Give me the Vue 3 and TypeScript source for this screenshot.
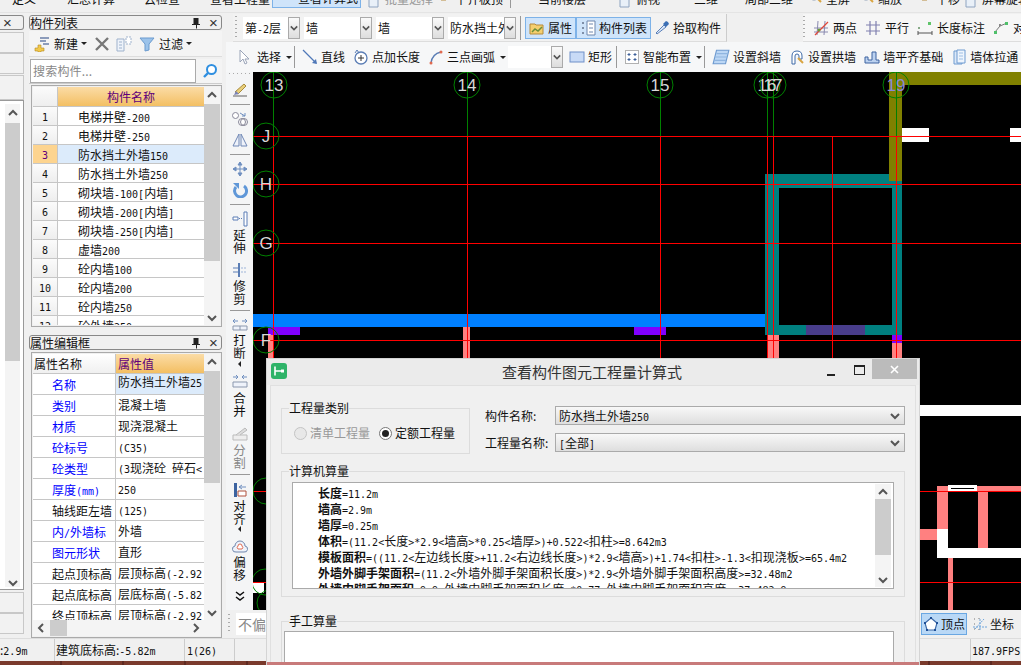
<template>
  <div class="app">
    <!-- top toolbar, mostly cut off by the window edge -->
    <div class="top-row">
      <div v-for="(it, i) in topItems" :key="i" class="top-item" :class="{ active: it.active, dim: it.dim, sep: it.sep }" :style="{ width: it.w + 'px' }">
        <svg v-if="it.icon" class="top-ico" viewBox="0 0 16 16" v-html="icons[it.icon]"></svg>
        <span>{{ it.t }}</span>
      </div>
    </div>

    <div class="body">
      <!-- left dock, only its right edge is visible -->
      <div class="far-dock">
        <div class="panel-title far-title"><span class="pin">×</span></div>
        <div class="far-box h21"></div>
        <div class="far-box h21"></div>
        <div class="far-box h25"></div>
        <div class="far-list">
          <div class="far-scroll">
            <svg class="chev" viewBox="0 0 10 8"><path d="M1 6l4-4 4 4" /></svg>
            <div class="far-thumb"></div>
            <svg class="chev" viewBox="0 0 10 8"><path d="M1 2l4 4 4-4" /></svg>
          </div>
        </div>
        <div class="far-box h21 mt1"></div>
        <div class="far-box h21"></div>
      </div>

      <!-- component list + properties -->
      <div class="side">
        <div class="panel-title">
          <span>构件列表</span>
          <svg class="pin-ico" viewBox="0 0 10 12"><path d="M2.500 1h5v6h1.500v1H6v3.500H5V8H1V7h1.500z" fill="#222" /></svg>
          <span class="pin">×</span>
        </div>
        <div class="list-tools">
          <svg class="ico" viewBox="0 0 16 16" v-html="icons.add"></svg>
          <span class="tool-txt">新建</span><i class="caret"></i>
          <svg class="ico del" viewBox="0 0 16 16"><path d="M2 2l12 12M14 2L2 14" stroke="#777" stroke-width="2.400" /></svg>
          <svg class="ico" viewBox="0 0 16 16" v-html="icons.copy"></svg>
          <svg class="ico" viewBox="0 0 16 16"><path d="M1 2h14L10 8v6l-4 1V8z" fill="#9cc3ea" stroke="#6b9bcf" /></svg>
          <span class="tool-txt">过滤</span><i class="caret"></i>
        </div>
        <div class="search">
          <div class="search-box">搜索构件...</div>
          <svg class="ico search-ico" viewBox="0 0 16 16"><circle cx="9.500" cy="6.500" r="4.500" fill="#fff" stroke="#2f8fe0" stroke-width="2" /><path d="M6 10l-4 4" stroke="#2f8fe0" stroke-width="2.400" /></svg>
        </div>

        <div class="grid list-grid">
          <div class="grid-main">
            <div class="row head">
              <div class="num-cell"></div>
              <div class="name-head">构件名称</div>
            </div>
            <div v-for="(name, i) in listRows" :key="i" class="row" :class="{ selected: i === 2 }">
              <div class="num-cell"><span class="n">{{ i + 1 }}</span></div>
              <div class="name-cell">
                <span v-for="(p, k) in parts(name)" :key="k" :class="{ n: p.a }">{{ p.t }}</span>
              </div>
            </div>
          </div>
          <div class="vscroll">
            <svg class="chev" viewBox="0 0 10 8"><path d="M1 6l4-4 4 4" /></svg>
            <div class="thumb list-thumb"></div>
            <svg class="chev end" viewBox="0 0 10 8"><path d="M1 2l4 4 4-4" /></svg>
          </div>
        </div>

        <div class="panel-title prop-title">
          <span>属性编辑框</span>
          <svg class="pin-ico" viewBox="0 0 10 12"><path d="M2.500 1h5v6h1.500v1H6v3.500H5V8H1V7h1.500z" fill="#222" /></svg>
          <span class="pin">×</span>
        </div>
        <div class="grid prop-grid">
          <div class="prop-top">
            <div class="grid-main">
              <div class="prow phead">
                <div class="pk-head">属性名称</div>
                <div class="pv-head">属性值</div>
              </div>
              <div v-for="(r, i) in propRows" :key="i" class="prow">
                <div class="pk" :class="{ blue: r.blue }">
                  <span v-for="(p, k) in parts(r.k)" :key="k" :class="{ n: p.a }">{{ p.t }}</span>
                </div>
                <div class="pv" :class="{ selected: i === 0 }">
                  <span v-for="(p, k) in parts(r.v)" :key="k" :class="{ n: p.a }">{{ p.t }}</span>
                </div>
              </div>
            </div>
            <div class="vscroll">
              <svg class="chev" viewBox="0 0 10 8"><path d="M1 6l4-4 4 4" /></svg>
              <div class="thumb prop-thumb"></div>
              <svg class="chev end" viewBox="0 0 10 8"><path d="M1 2l4 4 4-4" /></svg>
            </div>
          </div>
          <div class="hscroll">
            <svg class="chev-h" viewBox="0 0 8 10"><path d="M6 1L2 5l4 4" /></svg>
            <div class="hthumb"></div>
            <svg class="chev-h end" viewBox="0 0 8 10"><path d="M2 1l4 4-4 4" /></svg>
          </div>
        </div>
      </div>

      <!-- cad area -->
      <div class="cad">
        <div class="bar-2">
          <div class="bar-2-left">
            <i class="grip"></i>
            <div v-for="c in combos" :key="c.t" class="combo" :style="{ width: c.w + 'px' }">
              <span class="combo-txt">
                <span v-for="(p, k) in parts(c.t)" :key="k" :class="{ n: p.a }">{{ p.t }}</span>
              </span>
              <span class="combo-btn"><svg class="chev" viewBox="0 0 10 8"><path d="M1 2l4 4 4-4" /></svg></span>
            </div>
            <i class="vsep"></i>
            <div class="tog on attr">
              <svg class="ico" viewBox="0 0 16 16" v-html="icons.attr"></svg>属性
            </div>
            <div class="tog on lst">
              <svg class="ico" viewBox="0 0 16 16" v-html="icons.list"></svg>构件列表
            </div>
            <div class="tog pick">
              <svg class="ico" viewBox="0 0 16 16" v-html="icons.pick"></svg>拾取构件
            </div>
          </div>
          <div class="bar-2-right">
            <i class="grip"></i>
            <div v-for="it in measureItems" :key="it.t" class="tb-item">
              <svg class="ico" viewBox="0 0 16 16" v-html="icons[it.icon]"></svg>{{ it.t }}
            </div>
          </div>
        </div>

        <div class="bar-3">
          <svg class="ico sel-ico" viewBox="0 0 16 16" v-html="icons.select"></svg>
          <span class="draw-t sel-t">选择</span><i class="caret"></i>
          <i class="vsep sm"></i>
          <svg class="ico" viewBox="0 0 16 16" v-html="icons.line"></svg>
          <span class="draw-t">直线</span>
          <svg class="ico" viewBox="0 0 16 16" v-html="icons.pointlen"></svg>
          <span class="draw-t">点加长度</span>
          <svg class="ico" viewBox="0 0 16 16" v-html="icons.arc"></svg>
          <span class="draw-t">三点画弧</span><i class="caret"></i>
          <div class="combo blank"><span class="combo-txt"></span><span class="combo-btn"><svg class="chev" viewBox="0 0 10 8"><path d="M1 2l4 4 4-4" /></svg></span></div>
          <svg class="ico" viewBox="0 0 16 16" v-html="icons.rect"></svg>
          <span class="draw-t">矩形</span>
          <i class="vsep sm"></i>
          <svg class="ico" viewBox="0 0 16 16" v-html="icons.smart"></svg>
          <span class="draw-t">智能布置</span><i class="caret"></i>
          <i class="vsep sm"></i>
          <svg class="ico w18" viewBox="0 0 16 16" v-html="icons.slope"></svg>
          <span class="draw-t">设置斜墙</span>
          <svg class="ico" viewBox="0 0 16 16" v-html="icons.arch"></svg>
          <span class="draw-t">设置拱墙</span>
          <svg class="ico" viewBox="0 0 16 16" v-html="icons.base"></svg>
          <span class="draw-t">墙平齐基础</span>
          <svg class="ico" viewBox="0 0 16 16" v-html="icons.pull"></svg>
          <span class="draw-t">墙体拉通</span>
        </div>

        <div class="cad-mid">
          <div class="vtools">
            <i class="vgrip"></i>
            <template v-for="(v, i) in vtools" :key="i">
              <div v-if="v.sep" class="v-sep" :style="{ height: v.h + 'px' }"><i></i></div>
              <div v-else-if="v.icon" class="v-ico" :style="{ height: v.h + 'px' }">
                <svg class="ico" viewBox="0 0 16 16" v-html="icons[v.icon]"></svg>
              </div>
              <div v-else-if="v.tri" class="v-tri" :style="{ height: v.h + 'px' }"><i></i></div>
              <div v-else-if="v.more" class="v-tri" :style="{ height: v.h + 'px' }">
                <svg width="10" height="11" viewBox="0 0 10 11"><path d="M1 1l4 3 4-3M1 6l4 3 4-3" fill="none" stroke="#111" stroke-width="1.500" /></svg>
              </div>
              <div v-else class="v-txt" :class="{ dim: v.dim }" :style="{ height: v.h + 'px' }">
                <span v-for="ch in v.t" :key="ch">{{ ch }}</span>
              </div>
            </template>
          </div>

          <svg class="canvas" viewBox="253 72 768 538" shape-rendering="crispEdges">
            <rect v-for="(r, i) in blocks" :key="'b' + i" :x="r[0]" :y="r[1]" :width="r[2]" :height="r[3]" :fill="r[4]" />
            <line v-for="(l, i) in axisLines" :key="'l' + i" :x1="l[0]" :y1="l[1]" :x2="l[2]" :y2="l[3]" :stroke="l[4]" />
            <g v-for="a in axes" :key="a.t + a.x + a.y">
              <circle :cx="a.x" :cy="a.y" r="13" fill="none" stroke="#008000" shape-rendering="auto" />
              <text :x="a.x" :y="a.y + 6" class="axis-txt" :fill="a.c || '#d8d8d8'" text-anchor="middle">{{ a.t }}</text>
            </g>
          </svg>
        </div>

        <div class="bar-4">
          <i class="grip short"></i>
          <div class="offset-box">不偏移</div>
          <div class="snap">
            <div class="snap-btn on"><svg class="ico" viewBox="0 0 16 16" v-html="icons.vertex"></svg>顶点</div>
            <div class="snap-btn"><svg class="ico" viewBox="0 0 16 16" v-html="icons.coord"></svg>坐标</div>
          </div>
        </div>
      </div>
    </div>

    <div class="status">
      <span class="st st-a">:<span class="n">2.9m</span></span>
      <span class="st st-b">建筑底标高:<span class="n">-5.82m</span></span>
      <span class="st st-c"><span class="n">1(26)</span></span>
      <span class="st st-d"></span>
      <span class="st st-e"><span class="n">187.9FPS</span></span>
    </div>
    <div class="desktop"></div>

    <!-- floating dialog window -->
    <div class="dialog">
      <div class="dlg-title">
        <svg class="dlg-logo" viewBox="0 0 16 16"><rect width="16" height="16" rx="3" fill="#2eb368" /><path d="M4 3.500v9M4 8h6" stroke="#fff" stroke-width="1.600" fill="none" /><rect x="10" y="6.500" width="3" height="3" fill="#fff" /></svg>
        <span class="dlg-name">查看构件图元工程量计算式</span>
        <i class="win-min"></i>
        <i class="win-max"></i>
        <div class="win-close"><svg width="9" height="9" viewBox="0 0 9 9"><path d="M1 1l7 7M8 1L1 8" stroke="#fff" stroke-width="1.600" /></svg></div>
      </div>
      <div class="dlg-inner">
        <div class="dlg-top">
          <fieldset class="type-group">
            <legend>工程量类别</legend>
            <div class="radios">
              <span class="radio off"></span><span class="radio-t off-t">清单工程量</span>
              <span class="radio checked"></span><span class="radio-t">定额工程量</span>
            </div>
          </fieldset>
          <div class="fields">
            <div class="field">
              <label>构件名称:</label>
              <div class="select">防水挡土外墙<span class="n">250</span>
                <svg class="chev sel-chev" viewBox="0 0 10 8"><path d="M1 2l4 4 4-4" /></svg>
              </div>
            </div>
            <div class="field">
              <label>工程量名称:</label>
              <div class="select"><span class="n">[</span>全部<span class="n">]</span>
                <svg class="chev sel-chev" viewBox="0 0 10 8"><path d="M1 2l4 4 4-4" /></svg>
              </div>
            </div>
          </div>
        </div>

        <fieldset class="calc-group">
          <legend>计算机算量</legend>
          <div class="calc-box">
            <div class="calc-lines">
              <div v-for="l in calcLines" :key="l.b" class="calc-line">
                <b>{{ l.b }}</b><span v-for="(p, k) in parts(l.r)" :key="k" :class="{ n: p.a }">{{ p.t }}</span>
              </div>
            </div>
            <div class="vscroll calc-scroll">
              <svg class="chev" viewBox="0 0 10 8"><path d="M1 6l4-4 4 4" /></svg>
              <div class="thumb calc-thumb"></div>
              <svg class="chev end" viewBox="0 0 10 8"><path d="M1 2l4 4 4-4" /></svg>
            </div>
          </div>
        </fieldset>

        <fieldset class="manual-group">
          <legend>手工算量</legend>
          <div class="manual-box"></div>
        </fieldset>
      </div>
      <div class="dlg-strip"></div>
    </div>
  </div>
</template>

<script setup lang="ts">
interface Part { t: string; a: boolean }

// digits are half width in the original, so ascii runs get their own smaller mono span
const parts = (s: string): Part[] =>
  s.split(/([\x00-\x7f]+)/).filter(Boolean).map((t) => ({ t, a: /^[\x00-\x7f]/.test(t) }));

const icons: Record<string, string> = {
  add: '<path d="M1 12h3V9h3v3h3v3H7v1H4v-1H1z" fill="#f2c94c" stroke="#b58a1e" stroke-width=".6"/><path d="M6 2h9M6 5h6M9 8h6" stroke="#6a7fa8" stroke-width="1.300"/>',
  copy: '<path d="M1 3h7v12H1z" fill="#eef3fa" stroke="#9fb2cc"/><path d="M3 6h3M3 9h3M3 12h3" stroke="#9fb2cc"/><path d="M10 1h5v7h-5z" fill="#fff" stroke="#9fb2cc" stroke-dasharray="2 1"/>',
  attr: '<path d="M1 4h5l1 1h7v9H1z" fill="#f4cf6f" stroke="#b58a3c"/><path d="M3 12l3-3 3 2 4-4" stroke="#6b8f3a" stroke-width="1.500" fill="none"/>',
  list: '<path d="M2 2h2v2H2zM2 7h2v2H2zM2 12h2v2H2z" fill="#7f8fa8"/><path d="M7 1h8v14H7z" fill="#fff" stroke="#6f87ad"/><path d="M9 4h4M9 8h4M9 12h4" stroke="#6f87ad"/>',
  pick: '<path d="M3 14l-1-1 8-8 2 2z" fill="#d8e6f8" stroke="#5c80b8"/><path d="M9 4l3 3 3-3-1-2-2-1z" fill="#3c6fb4"/>',
  twopt: '<path d="M1 8h14M1 12h14M5 1l-1 14M12 1l-1 14" stroke="#8a8ab0"/><path d="M2 15L15 2" stroke="#e0473a" stroke-width="1.200"/><circle cx="6" cy="10" r="1.500" fill="#6b9a3a"/>',
  parallel: '<path d="M1 5h14M1 11h14M5 1v14M11 1v14" stroke="#8080b0" stroke-width="1.200"/>',
  dim: '<rect x="11" y="2" width="3" height="3" fill="#5fc46a"/><rect x="1" y="7" width="2" height="2" fill="#8a8"/><path d="M1 11v4M15 11v4M1 13h14" stroke="#555"/>',
  align2: '<path d="M2 12L7 6l7-3" stroke="#777" fill="none"/><rect x="1" y="11" width="3" height="3" fill="#4fc06a"/><rect x="12" y="2" width="3" height="3" fill="#4fc06a"/><rect x="6" y="4" width="2" height="2" fill="#888"/>',
  select: '<path d="M4 1v12l3-3 2 5 2-1-2-4h4z" fill="#fff" stroke="#9aa4b8"/>',
  line: '<path d="M1 1l13 13" stroke="#4f78b8" stroke-width="1.300"/><path d="M15 15l-5-1 4-4z" fill="#4f78b8"/>',
  pointlen: '<circle cx="8" cy="9" r="6" fill="#fff" stroke="#5a7db5" stroke-width="1.300"/><path d="M8 6v6M5 9h6" stroke="#333"/><path d="M2 4l2-3 2 3" fill="none" stroke="#5a7db5"/>',
  arc: '<path d="M3 14Q4 5 13 3" fill="none" stroke="#5a7db5" stroke-width="1.300"/><circle cx="3" cy="14" r="1.500" fill="#e06a50"/><circle cx="13" cy="3" r="1.500" fill="#e06a50"/>',
  rect: '<rect x="1" y="3" width="14" height="10" fill="#c8daf6" stroke="#6f90c8"/>',
  smart: '<rect x="1.500" y="1.500" width="13" height="13" fill="#fff" stroke="#666" stroke-dasharray="1 1"/><path d="M5 4v3M3.500 5.500h3M11 4v3M9.500 5.500h3M5 9v3M3.500 10.500h3M11 9v3M9.500 10.500h3" stroke="#3c5f98"/>',
  slope: '<path d="M4 2h11l-3 12H1z" fill="#bcd7f5" stroke="#6f9bd0"/><path d="M4 5h10M3 8h10M2.500 11h10" stroke="#8fb5e0"/>',
  arch: '<path d="M3 15V7q0-5 5-5t5 5v3h-3V7q0-2-2-2T6 7v8z" fill="#fff" stroke="#3f6ba8"/><path d="M9 9l5 5" stroke="#d9a441" stroke-width="2"/>',
  base: '<path d="M1 14h14v-3h-3V3H8v8H4V8H1z" fill="#bcd2f0" stroke="#3c63a0"/>',
  pull: '<path d="M3 2h8v13H3z" fill="#dbe8f8" stroke="#6f9bd0"/><path d="M6 1h8v13H6z" fill="#eef5fd" stroke="#6f9bd0"/><path d="M8 4h4M8 7h4M8 10h4" stroke="#9fbfe4"/>',
  brush: '<path d="M1 14h14" stroke="#777" stroke-width="1.200"/><path d="M3 10l9-8 2 2-8 8z" fill="#e9cf7a" stroke="#a98c3c"/><path d="M2 13l2-4 3 3z" fill="#7a83b8"/>',
  link: '<circle cx="3.500" cy="4.500" r="3" fill="#fff" stroke="#889"/><circle cx="10" cy="11" r="3.500" fill="#fff" stroke="#889"/><circle cx="12" cy="11" r="3.500" fill="none" stroke="#889"/><path d="M8 2l5 3m0 0h-3m3 0V2" fill="none" stroke="#6f8fc0"/>',
  mirror: '<path d="M7 2L1 14h6zM9 2l6 12H9z" fill="#eef2fa" stroke="#6f87b5"/>',
  move: '<path d="M8 1v14M1 8h14M8 1L6 4h4zM8 15l-2-3h4zM1 8l3-2v4zM15 8l-3-2v4z" stroke="#6f8fc0" fill="#6f8fc0"/>',
  rotate: '<path d="M12 4a6 6 0 1 1-8 1" fill="none" stroke="#5f97d8" stroke-width="3"/><path d="M1 1h6v6z" fill="#5f97d8"/>',
  extend: '<path d="M12 1h3v14h-3z" fill="#fff" stroke="#5a7db5"/><path d="M1 6h5v3H1z" fill="#fff" stroke="#5a7db5"/><path d="M7 7.500h4" stroke="#5a7db5" stroke-dasharray="1 1"/>',
  trim: '<path d="M7 1v14" stroke="#5a7db5" stroke-width="2"/><path d="M1 6h5M1 10h5" stroke="#5a7db5"/><path d="M9 6h6M9 10h6" stroke="#9db4d8" stroke-dasharray="2 1"/>',
  breakit: '<path d="M1 5h5M1 5l2-2M1 5l2 2M15 5h-5M15 5l-2-2M15 5l-2 2" stroke="#6f8fc0" fill="none"/><path d="M1 10h14v4H1zM8 10v4" fill="#eef2fa" stroke="#8a97ad"/>',
  merge: '<path d="M1 3h5M6 3L4 1M6 3L4 5M15 3h-5M10 3l2-2M10 3l2 2" stroke="#6f8fc0" fill="none"/><path d="M1 8h14v5H1z" fill="#eef2fa" stroke="#8a97ad"/>',
  split: '<path d="M1 14h14v-5H1z" fill="#eee" stroke="#bbb"/><path d="M4 9L13 2l2 2-7 5" fill="#ddd" stroke="#bbb"/>',
  alignit: '<path d="M2 1h3v14H2z" fill="#3c63a0"/><path d="M6 9h8v5H6z" fill="#fff" stroke="#b0503c"/><path d="M7 5h7M7 5l3-2M7 5l3 2" stroke="#6f8fc0" fill="none"/>',
  offset: '<path d="M4 14a3 3 0 0 1-1-6 5 5 0 0 1 10 0 3 3 0 0 1-1 6z" fill="#eef2fa" stroke="#6f87ad"/><path d="M6 11a2 2 0 0 1 0-3 2 2 0 0 1 4 0 2 2 0 0 1 0 3z" fill="#fff" stroke="#e06a50"/>',
  vertex: '<path d="M8 2l6 5-2 7H4L2 7z" fill="#fff" stroke="#3f6ba8" stroke-width="1.200"/><path d="M7 1h2v2H7zM13 6h2v2h-2zM11 13h2v2h-2zM3 13h2v2H3zM1 6h2v2H1z" fill="#1f4f96"/>',
  coord: '<path d="M2 3h1M2 8h1M2 13h1M7 2v1M7 13v1" stroke="#777"/><path d="M1 11h14M8 3v12M3 13l9-10" stroke="#6fa5dc" stroke-dasharray="2 1" fill="none"/>',
  doc: '<path d="M3 1h9v14H3z" fill="#e9f0f8" stroke="#8fa4c0"/>',
  sum: '<path d="M1 1h14v6H1z" fill="#cde3c8" stroke="#6aa35c"/>',
  view: '<circle cx="5" cy="3" r="4" fill="#dfe8f2" stroke="#7f93ad"/><circle cx="12" cy="3" r="3" fill="#dfe8f2" stroke="#7f93ad"/>',
  zoom: '<circle cx="7" cy="3" r="5" fill="#e8f0f8" stroke="#7f93ad"/><path d="M10 6l4 4" stroke="#d9a441" stroke-width="2"/>',
  calc: '<path d="M1 0h9v6H1z" fill="#f2d58a" stroke="#b58a3c"/><circle cx="12" cy="4" r="3" fill="#888"/>',
  pan: '<path d="M3 0h10v5l-3 3H5z" fill="#eed39a" stroke="#b58a3c"/>',
}

const topItems = [
  { t: '定义', w: 38 },
  { t: '', w: 3, sep: true },
  { t: '汇总计算', w: 76, icon: 'sum' },
  { t: '云检查', w: 65, icon: 'sum' },
  { t: '', w: 3, sep: true },
  { t: '查看工程量', w: 87, icon: 'view' },
  { t: '查看计算式', w: 89, icon: 'calc', active: true },
  { t: '批量选择', w: 74, icon: 'doc', dim: true },
  { t: '平齐板顶', w: 70, icon: 'pan' },
  { t: '', w: 8, sep: true },
  { t: '当前楼层', w: 75, icon: '' },
  { t: '俯视', w: 74, icon: 'doc' },
  { t: '三维', w: 58, icon: 'view' },
  { t: '局部三维', w: 75, icon: 'view' },
  { t: '', w: 4, sep: true },
  { t: '全屏', w: 53, icon: 'zoom' },
  { t: '缩放', w: 52, icon: 'zoom' },
  { t: '平移', w: 58, icon: 'pan' },
  { t: '屏幕旋转', w: 70, icon: 'doc' },
]

const listRows = ['电梯井壁-200', '电梯井壁-250', '防水挡土外墙150', '防水挡土外墙250', '砌块墙-100[内墙]', '砌块墙-200[内墙]', '砌块墙-250[内墙]', '虚墙200', '砼内墙100', '砼内墙200', '砼内墙250', '砼外墙250']

const propRows = [
  { k: '名称', v: '防水挡土外墙25', blue: true },
  { k: '类别', v: '混凝土墙', blue: true },
  { k: '材质', v: '现浇混凝土', blue: true },
  { k: '砼标号', v: '(C35)', blue: true },
  { k: '砼类型', v: '(3现浇砼 碎石<', blue: true },
  { k: '厚度(mm)', v: '250', blue: true },
  { k: '轴线距左墙', v: '(125)' },
  { k: '内/外墙标', v: '外墙', blue: true },
  { k: '图元形状', v: '直形', blue: true },
  { k: '起点顶标高', v: '层顶标高(-2.92' },
  { k: '起点底标高', v: '层底标高(-5.82' },
  { k: '终点顶标高', v: '层顶标高(-2.92' },
]

const combos = [
  { t: '第-2层', w: 57 },
  { t: '墙', w: 68 },
  { t: '墙 ', w: 68 },
  { t: '防水挡土外墙', w: 68 },
]

const measureItems = [
  { t: '两点', icon: 'twopt' },
  { t: '平行', icon: 'parallel' },
  { t: '长度标注', icon: 'dim' },
  { t: '对', icon: 'align2' },
]

interface VTool { h: number; sep?: boolean; icon?: string; t?: string; tri?: boolean; more?: boolean; dim?: boolean }

const vtools: VTool[] = [
  { h: 20, icon: 'brush' }, { h: 8, sep: true },
  { h: 21, icon: 'link' }, { h: 21, icon: 'mirror' }, { h: 8, sep: true },
  { h: 21, icon: 'move' }, { h: 21, icon: 'rotate' }, { h: 8, sep: true },
  { h: 21, icon: 'extend' }, { h: 26, t: '延伸' },
  { h: 25, icon: 'trim' }, { h: 25, t: '修剪' }, { h: 10, sep: true },
  { h: 19, icon: 'breakit' }, { h: 25, t: '打断' }, { h: 10, tri: true },
  { h: 23, icon: 'merge' }, { h: 26, t: '合并' },
  { h: 26, icon: 'split' }, { h: 26, t: '分割', dim: true }, { h: 8, sep: true },
  { h: 22, icon: 'alignit' }, { h: 26, t: '对齐' }, { h: 6, tri: true },
  { h: 24, icon: 'offset' }, { h: 26, t: '偏移' }, { h: 28, more: true },
]

// x, y, w, h, colour in page coordinates; the svg viewBox starts at the canvas corner
const blocks: [number, number, number, number, string][] = [
  [253, 314, 513, 13, '#0080ff'],
  [268, 327, 32, 8, '#8000ff'],
  [634, 327, 32, 8, '#8000ff'],
  [268, 335, 6, 25, '#ff8080'],
  [463, 327, 7, 33, '#ff8080'],
  [768, 335, 11, 25, '#ff8080'],
  [892, 335, 10, 8, '#8000ff'],
  [892, 343, 10, 17, '#ff8080'],
  [889, 72, 13, 109, '#808000'],
  [902, 72, 119, 13, '#808000'],
  [902, 128, 27, 14, '#ffffff'],
  [1010, 128, 11, 14, '#ffffff'],
  [765, 174, 137, 14, '#008080'],
  [765, 325, 137, 10, '#008080'],
  [765, 174, 14, 161, '#008080'],
  [892, 174, 10, 161, '#008080'],
  [889, 174, 13, 7, '#808000'],
  [806, 325, 59, 10, '#483d8b'],
  [920, 405, 101, 11, '#ffffff'],
  [937, 486, 84, 6, '#ff8080'],
  [937, 486, 11, 43, '#ff8080'],
  [948, 485, 29, 7, '#ffffff'],
  [951, 488, 23, 1, '#000000'],
  [978, 486, 10, 62, '#ff8080'],
  [920, 529, 17, 11, '#ff8080'],
  [937, 529, 11, 29, '#ffffff'],
  [937, 548, 84, 10, '#ffffff'],
  [948, 558, 5, 52, '#ff8080'],
  [253, 583, 11, 10, '#ffffff'],
]

// every axis is green above line J and red from there down
const axisLines: [number, number, number, number, string][] = [
  ...[273.5, 467.5, 660.5, 767.5, 773.5, 896.5].flatMap((x): [number, number, number, number, string][] => [
    [x, 72, x, 136, '#008000'],
    [x, 136, x, 360, '#ff0000'],
  ]),
  [832.5, 136, 832.5, 360, '#ff0000'],
  [253, 136.5, 1021, 136.5, '#ff0000'],
  [253, 184.5, 1021, 184.5, '#ff0000'],
  [253, 243.5, 1021, 243.5, '#ff0000'],
  [253, 340.5, 1021, 340.5, '#ff0000'],
  [253, 491.5, 1021, 491.5, '#ff0000'],
  [253, 582.5, 1021, 582.5, '#ff0000'],
]

const axes = [
  { t: '13', x: 274, y: 85 }, { t: '14', x: 467, y: 85 }, { t: '15', x: 660, y: 85 },
  { t: '16', x: 767, y: 85 }, { t: '17', x: 773, y: 85 }, { t: '19', x: 896, y: 85, c: '#8a8ad8' },
  { t: 'J', x: 266, y: 136 }, { t: 'H', x: 266, y: 184 }, { t: 'G', x: 266, y: 243 }, { t: 'F', x: 266, y: 340 },
  { t: '', x: 266, y: 491 }, { t: '', x: 265, y: 582 }, { t: '', x: 270, y: 603 },
]

const calcLines = [
  { b: '长度', r: '=11.2m' },
  { b: '墙高', r: '=2.9m' },
  { b: '墙厚', r: '=0.25m' },
  { b: '体积', r: '=(11.2<长度>*2.9<墙高>*0.25<墙厚>)+0.522<扣柱>=8.642m3' },
  { b: '模板面积', r: '=((11.2<左边线长度>+11.2<右边线长度>)*2.9<墙高>)+1.74<扣柱>-1.3<扣现浇板>=65.4m2' },
  { b: '外墙外脚手架面积', r: '=(11.2<外墙外脚手架面积长度>)*2.9<外墙外脚手架面积高度>=32.48m2' },
  { b: '外墙内脚手架面积', r: '=9.9<外墙内脚手架面积长度>*0.77<外墙内脚手架面积高度>=37.482 9' },
]
</script>

<style>
html, body { margin: 0; background: #f0f0f0; overflow: hidden; }
</style>

<style scoped>
.app {
  width: 1021px;
  height: 665px;
  display: flex;
  flex-direction: column;
  position: relative;
  overflow: hidden;
  background: #f0f0f0;
  font: 12px/14px "Noto Sans CJK SC", sans-serif;
  color: #111;
}
.n { font-family: "DejaVu Sans Mono", monospace; font-size: 10px; }
i { display: block; flex: none; }

/* top cut-off row */
.top-row { height: 13px; flex: none; display: flex; align-items: flex-start; border-bottom: 1px solid #e4e4e4; box-sizing: border-box; }
.top-item { height: 8px; flex: none; display: flex; justify-content: flex-end; align-items: flex-end; gap: 3px; padding-right: 2px; box-sizing: border-box; overflow: hidden; }
.top-item span { position: relative; top: -2px; white-space: nowrap; font-size: 12px; }
.top-item.dim span { color: #999; }
.top-item.active { background: #cfe4fa; border: 1px solid #7db2e8; border-top: 0; }
.top-item.sep { position: relative; }
.top-item.sep::after { content: ""; width: 1px; height: 8px; background: #999; margin-right: 0; }
.top-ico { width: 16px; height: 16px; flex: none; margin-bottom: 0; align-self: flex-start; margin-top: -8px; }

.body { flex: 1; min-height: 0; display: flex; }

.far-dock { width: 24px; flex: none; padding-top: 2px; margin-right: 5px; display: flex; flex-direction: column; }
.panel-title { height: 15px; flex: none; box-sizing: border-box; border: 1px solid #888; border-radius: 3px; background: #f0f0f0; display: flex; align-items: center; font-size: 12px; }
.panel-title > span:first-child { margin-right: auto; }
.far-title { border-left: 0; border-radius: 0 3px 3px 0; justify-content: flex-end; }
.pin { font: 15px/13px "Liberation Sans", sans-serif; color: #333; width: 15px; text-align: center; }
.pin-ico { width: 10px; height: 12px; margin-right: 5px; }
.far-box { border: 1px solid #c8c8c8; border-left: 0; box-sizing: border-box; flex: none; background: #f2f2f2; }
.h21 { height: 21px; }
.h25 { height: 25px; margin-top: 1px; }
.far-box:nth-child(2) { margin-top: 2px; }
.mt1 { margin-top: 2px; }
.far-list { height: 490px; flex: none; background: #fff; border: 1px solid #999; border-left: 0; box-sizing: border-box; padding: 3px 3px 2px 5px; }
.far-scroll { width: 15px; height: 100%; background: #f4f4f4; display: flex; flex-direction: column; align-items: center; justify-content: space-between; padding-top: 5px; box-sizing: border-box; }
.far-thumb { width: 15px; height: 238px; background: #ccc; margin-bottom: auto; margin-top: 6px; }
.chev { width: 10px; height: 8px; flex: none; }
.chev path { fill: none; stroke: #555; stroke-width: 2; }
.chev-h { width: 8px; height: 10px; flex: none; }
.chev-h path { fill: none; stroke: #555; stroke-width: 2; }

/* side panels */
.side { width: 193px; flex: none; padding-top: 2px; display: flex; flex-direction: column; }
.list-tools { height: 26px; flex: none; margin-top: 1px; display: flex; align-items: center; padding-left: 5px; background: #f4f4f4; border-bottom: 1px solid #ddd; box-sizing: border-box; }
.ico { width: 16px; height: 16px; flex: none; }
.w18 { width: 18px; height: 18px; }
.tool-txt { margin-left: 4px; }
.caret { width: 0; height: 0; border: 3px solid transparent; border-top: 3px solid #222; border-bottom: 0; margin-left: 3px; }
.del { margin: 0 6px 0 7px; }
.del + .ico { margin-right: 7px; }
.search { height: 25px; flex: none; margin-top: 2px; display: flex; align-items: center; padding-left: 1px; background: #f4f4f4; border-bottom: 1px solid #ccc; box-sizing: border-box; }
.search-box { width: 166px; height: 24px; box-sizing: border-box; background: #fff; border: 1px solid #aaa; color: #888; padding: 4px 2px; letter-spacing: .2px; }
.search-ico { margin-left: 6px; }

.grid { border: 1px solid #aaa; background: #f0f0f0; margin-left: 2px; width: 191px; box-sizing: border-box; flex: none; padding: 1px; }
.list-grid { margin-top: 1px; height: 242px; display: flex; overflow: hidden; }
.grid-main { flex: 1; min-width: 0; overflow: hidden; background: #fff; }
.row { height: 19px; box-sizing: border-box; display: flex; border-bottom: 1px solid #c6c6c6; }
.row.head { height: 20px; border-bottom: 1px solid #c6c6c6; }
.num-cell { width: 25px; flex: none; box-sizing: border-box; text-align: center; background: linear-gradient(#fbfbfb, #eee); border-right: 1px solid #c6c6c6; line-height: 18px; }
.name-head { flex: 1; text-align: center; color: #60007a; line-height: 19px; background: linear-gradient(#fbdca6, #f3bf63); }
.name-cell { flex: 1; padding-left: 20px; line-height: 19px; white-space: nowrap; }
.row.selected .num-cell { background: #fdd48f; color: #60007a; }
.row.selected .name-cell { background: #dcebfb; }
.vscroll { width: 16px; flex: none; display: flex; flex-direction: column; align-items: center; background: #f4f4f4; padding-top: 4px; box-sizing: border-box; }
.thumb { width: 16px; background: #ccc; flex: none; }
.list-thumb { height: 157px; margin-top: 5px; }
.chev.end { margin-top: auto; margin-bottom: 3px; }

.prop-title { margin-top: 8px; }
.prop-grid { margin-top: 2px; height: 286px; display: flex; flex-direction: column; }
.prop-top { flex: 1; min-height: 0; display: flex; overflow: hidden; }
.prow { height: 21px; box-sizing: border-box; display: flex; border-bottom: 1px solid #c6c6c6; white-space: nowrap; }
.phead { height: 20px; }
.pk-head { width: 83px; flex: none; box-sizing: border-box; padding-left: 1px; line-height: 20px; background: linear-gradient(#fff, #f0f0f0); border-right: 1px solid #c6c6c6; }
.pv-head { flex: 1; padding-left: 2px; line-height: 20px; color: #60007a; background: linear-gradient(#fbdca6, #f3bf63); }
.pk { width: 83px; flex: none; box-sizing: border-box; padding-left: 19px; line-height: 22px; border-right: 1px solid #c6c6c6; }
.pk.blue { color: #0000ff; }
.pv { flex: 1; min-width: 0; overflow: hidden; padding-left: 2px; line-height: 20px; }
.pv.selected { background: #dcebfb; line-height: 16px; }
.prop-thumb { height: 112px; margin-top: 5px; }
.hscroll { height: 16px; flex: none; background: #f4f4f4; display: flex; align-items: center; padding-left: 4px; padding-right: 20px; }
.hthumb { width: 17px; height: 16px; background: #ccc; margin-left: 5px; margin-right: auto; }

/* cad column */
.cad { flex: 1; min-width: 0; margin-left: 4px; display: flex; flex-direction: column; }
.bar-2 { height: 28px; flex: none; margin-top: 1px; display: flex; }
.bar-2-left { width: 494px; flex: none; display: flex; align-items: center; background: #f2f2f2; border-right: 1px solid #ccc; border-bottom: 1px solid #ddd; margin-left: 7px; padding-left: 2px; box-sizing: border-box; white-space: nowrap; }
.bar-2-right { margin-left: 76px; flex: 1; display: flex; align-items: center; gap: 8px; background: #f6f6f6; border-bottom: 1px solid #ddd; overflow: hidden; white-space: nowrap; }
.grip { width: 2px; height: 24px; margin-right: 6px; background: repeating-linear-gradient(#aaa 0 1px, transparent 1px 4px); }
.bar-2-right .grip { margin-right: 0; }
.grip.short { height: 20px; }
.combo { height: 22px; flex: none; display: flex; margin-right: 4px; background: #fff; white-space: nowrap; }
.combo-txt { flex: 1; min-width: 0; overflow: hidden; padding-left: 2px; line-height: 22px; font-size: 12px; }
.combo-btn { width: 12px; flex: none; box-sizing: border-box; border: 1px solid #aaa; background: linear-gradient(#fafafa, #ddd); display: flex; align-items: center; justify-content: center; }
.combo-btn .chev { width: 8px; }
.vsep { width: 1px; height: 24px; background: #999; margin: 0 4px 0 0; }
.vsep.sm { height: 22px; margin: 0 1px 0 2px; }
.tog { height: 22px; box-sizing: border-box; display: flex; align-items: center; gap: 3px; padding: 0 3px; flex: none; }
.tog.on { background: #cfe4fa; border: 1px solid #7db2e8; }
.attr { width: 51px; }
.lst { width: 75px; }
.pick { width: 76px; }
.tb-item { display: flex; align-items: center; gap: 4px; }
.bar-3 { height: 30px; flex: none; display: flex; align-items: center; background: #f6f7f8; white-space: nowrap; padding-left: 10px; overflow: hidden; }
.bar-3 .ico { margin-right: 3px; margin-left: 6px; }
.bar-3 .sel-ico { margin-left: 0; margin-right: 5px; }
.draw-t { margin-right: 2px; }
.blank { width: 55px; margin: 0 0 0 2px; }

.cad-mid { height: 538px; flex: none; display: flex; }
.vtools { width: 27px; flex: none; display: flex; flex-direction: column; align-items: center; background: #f4f5f6; }
.vgrip { width: 22px; height: 8px; flex: none; background: repeating-linear-gradient(90deg, #aaa 0 1px, transparent 1px 4px) center 1px / 100% 1px no-repeat; }
.v-ico { width: 100%; display: flex; justify-content: center; align-items: flex-end; padding-bottom: 2px; box-sizing: border-box; flex: none; }
.v-sep { width: 100%; display: flex; align-items: center; justify-content: center; flex: none; }
.v-sep i { width: 20px; height: 1px; background: #999; }
.v-tri { width: 100%; display: flex; align-items: center; justify-content: center; flex: none; }
.v-tri i { width: 0; height: 0; border: 3px solid transparent; border-right: 3px solid #222; border-left: 0; }
.v-txt { width: 100%; display: flex; flex-direction: column; align-items: center; flex: none; font-size: 12.5px; line-height: 12.5px; }
.v-txt.dim { color: #888; }
.canvas { flex: 1; min-width: 0; height: 538px; background: #000; display: block; }
.axis-txt { font: 17px "Liberation Sans", sans-serif; }

.bar-4 { flex: 1; min-height: 0; display: flex; align-items: center; padding-left: 2px; }
.offset-box { width: 80px; height: 22px; background: #fff; color: #888; line-height: 22px; font-size: 14px; padding-left: 2px; }
.snap { margin-left: auto; display: flex; gap: 4px; padding-right: 6px; }
.snap-btn { height: 22px; box-sizing: border-box; display: flex; align-items: center; gap: 2px; padding: 0 1px; }
.snap-btn.on { background: #b9d8f6; border: 1px solid #6aa7e2; }

.status { height: 23px; flex: none; display: flex; align-items: center; border-top: 1px solid #ddd; box-sizing: border-box; background: #f0f0f0; }
.st { height: 100%; box-sizing: border-box; border-right: 1px solid #ccc; line-height: 21px; white-space: nowrap; flex: none; }
.st-a { width: 55px; }
.st-b { width: 130px; padding-left: 1px; }
.st-c { width: 50px; padding-left: 2px; }
.st-d { width: 736px; border-left: 0; }
.st-e { flex: 1; padding-left: 1px; border: 0; }
.desktop { height: 4px; flex: none; background: repeating-linear-gradient(90deg, #7a3a2c 0 60px, #5e2a22 60px 62px); }

/* dialog window */
.dialog { position: absolute; left: 266px; top: 358px; width: 654px; height: 307px; box-sizing: border-box; background: #f0f0f0; border: 1px solid #d4d4d4; border-bottom: 0; display: flex; flex-direction: column; }
.dlg-title { height: 26px; flex: none; background: #ebebeb; display: flex; align-items: flex-start; position: relative; }
.dlg-logo { width: 16px; height: 16px; position: absolute; left: 4px; top: 4px; }
.dlg-name { position: absolute; left: 235px; top: 3px; font-size: 15px; line-height: 20px; color: #333; white-space: nowrap; }
.win-min { position: absolute; left: 560px; top: 15px; width: 8px; height: 2px; background: #222; }
.win-max { position: absolute; left: 587px; top: 6px; width: 9px; height: 7px; border: 1px solid #222; border-top-width: 2px; }
.win-close { position: absolute; left: 605px; top: 0; width: 45px; height: 20px; background: #bbb; display: flex; align-items: center; justify-content: center; }
.dlg-inner { flex: 1; min-height: 0; margin: 0 3px; border: 1px solid #e0e0e0; border-bottom: 0; padding: 15px 10px 0; overflow: hidden; }
.dlg-top { display: flex; height: 53px; }
fieldset { border: 1px solid #dcdcdc; margin: 0; box-sizing: border-box; min-width: 0; }
legend { padding: 0; margin-left: 7px; font-size: 12px; line-height: 14px; background: #f0f0f0; }
.type-group { width: 189px; height: 53px; padding: 0; flex: none; }
.radios { display: flex; align-items: center; padding: 11px 0 0 12px; }
.radio { width: 13px; height: 13px; box-sizing: border-box; border-radius: 50%; border: 1px solid #777; background: #fff; flex: none; position: relative; }
.radio.off { border-color: #c4c4c4; background: #e8e8e8; }
.radio.checked::after { content: ""; position: absolute; left: 2px; top: 2px; width: 7px; height: 7px; border-radius: 50%; background: #222; }
.radio-t { margin-left: 3px; margin-right: 9px; white-space: nowrap; }
.off-t { color: #999; }
.fields { flex: 1; padding: 5px 0 0 15px; display: flex; flex-direction: column; gap: 8px; }
.field { display: flex; align-items: center; height: 19px; }
.field label { width: 70px; flex: none; white-space: nowrap; }
.select { flex: 1; height: 19px; box-sizing: border-box; border: 1px solid #aaa; background: linear-gradient(#f8f8f8, #dedede); padding-left: 3px; line-height: 17px; position: relative; }
.sel-chev { position: absolute; right: 4px; top: 5px; }
.calc-group { margin-top: 10px; height: 133px; padding: 4px 10px 7px; }
.calc-group legend { margin-left: -3px; }
.calc-box { height: 107px; box-sizing: border-box; border: 1px solid #aaa; background: #fff; display: flex; overflow: hidden; }
.calc-lines { flex: 1; min-width: 0; padding: 2px 0 0 25px; overflow: hidden; white-space: nowrap; line-height: 16px; }
.calc-line { height: 16px; }
.calc-scroll { margin: 1px 2px; }
.calc-thumb { height: 56px; margin-top: 3px; }
.manual-group { margin-top: 17px; height: 60px; padding: 3px 10px 0 2px; }
.manual-group legend { margin-left: 5px; }
.manual-box { height: 40px; border: 1px solid #aaa; background: #fff; box-sizing: border-box; }
.dlg-strip { height: 3px; flex: none; background: #c87a7a; }
</style>
